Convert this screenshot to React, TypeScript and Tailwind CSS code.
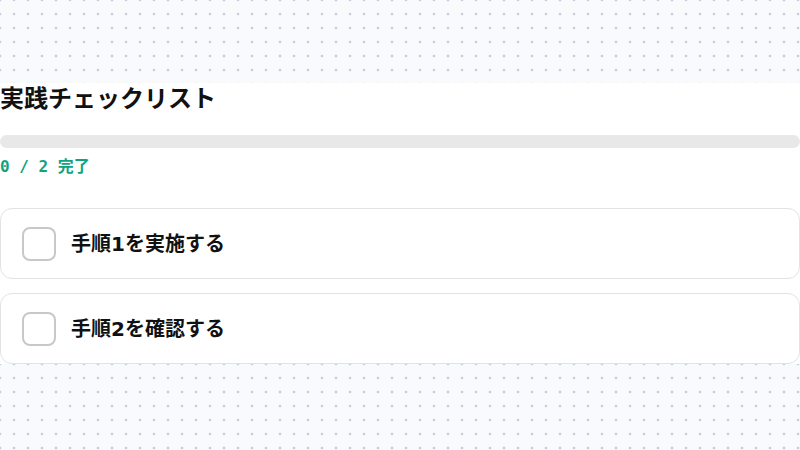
import React from "react";

const steps = ["手順1を実施する", "手順2を確認する"];

const App = () => {
  return (
    <div className="h-screen overflow-hidden bg-[#f8fafc] bg-[radial-gradient(circle,#c6ced9_1.5px,transparent_1.6px)] bg-[length:14px_14px] bg-[position:7px_7px] pt-[83px] font-['DejaVu_Sans','Noto_Sans_CJK_JP',sans-serif] text-[#111]">
      <div className="bg-white">
        <h2 className="text-[24px] leading-[32px] font-bold">実践チェックリスト</h2>
        <div className="mt-[20px] h-[13px] w-full rounded-full bg-[#e8e8e8]" />
        <p className="mt-[7px] text-[16px] leading-[24px] font-bold text-[#10a37f] font-['DejaVu_Sans_Mono','Noto_Sans_CJK_JP',monospace]">
          0 / 2 完了
        </p>
        <div className="mt-[29px] flex flex-col gap-[14px]">
          {steps.map((s) => (
            <label
              key={s}
              className="flex h-[71px] items-center gap-[15px] rounded-[12px] border border-[#e3e3e3] bg-white pl-[21px]"
            >
              <span className="h-[34px] w-[34px] shrink-0 rounded-[8px] border-2 border-[#c8c8c8] bg-white" />
              <span className="text-[20px] font-bold leading-none">{s}</span>
            </label>
          ))}
        </div>
      </div>
    </div>
  );
};

export default App;
